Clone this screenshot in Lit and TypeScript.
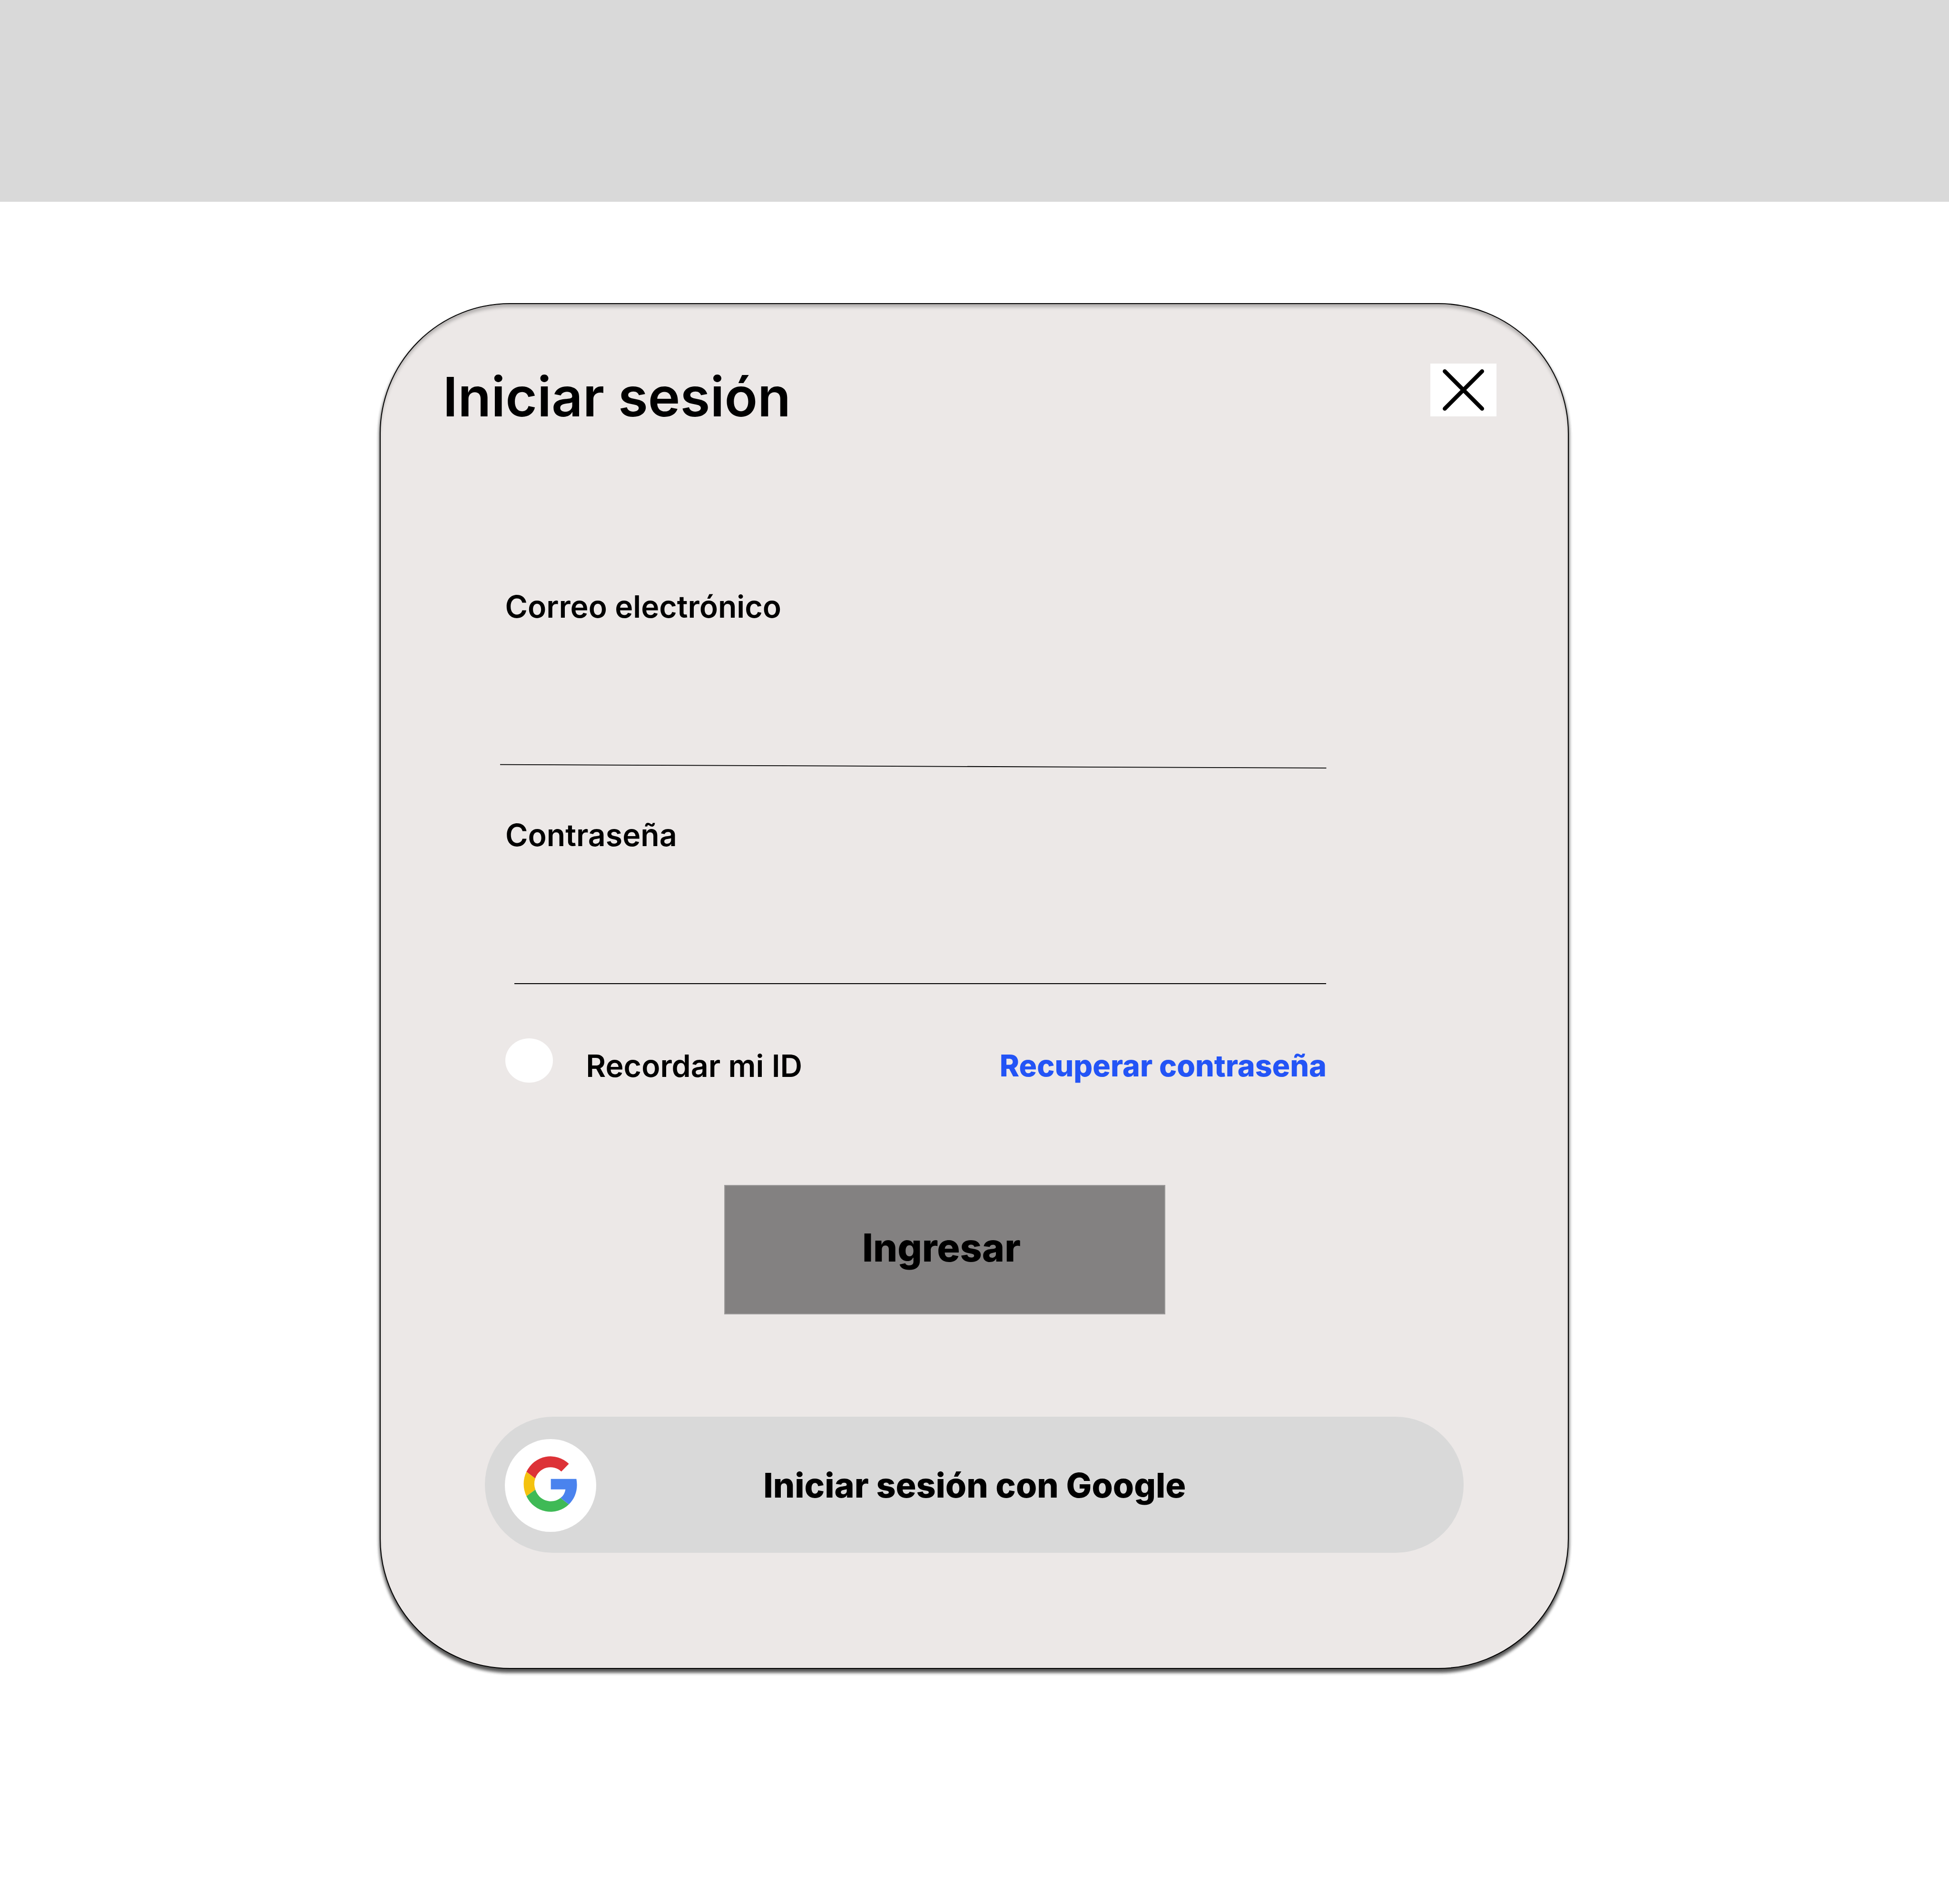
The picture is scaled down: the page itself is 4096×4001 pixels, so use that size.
import { LitElement, html, css, svg } from "lit";
import { customElement } from "lit/decorators.js";

@customElement("close-button")
class CloseButton extends LitElement {
  static styles = css`
    :host {
      display: block;
      width: 139px;
      height: 111px;
      background: #fff;
    }
    svg {
      display: block;
      width: 100%;
      height: 100%;
    }
  `;

  render() {
    return html`
      <svg viewBox="0 0 156 124" role="button" aria-label="Cerrar">
        <path d="M34 18L122 106M122 18L34 106" fill="none" stroke="#000" stroke-width="9.6" stroke-linecap="round" />
      </svg>
    `;
  }
}

@customElement("google-mark")
class GoogleMark extends LitElement {
  static styles = css`
    :host {
      display: block;
      width: 191.5px;
      height: 195px;
      border-radius: 50%;
      background: #fff;
    }
    svg {
      display: block;
      width: 100%;
      height: 100%;
    }
  `;

  private segments = [
    { fill: "#dd3237", d: "M350 464A188.5 194 0 0 1 649 408L596 462A114 117 0 0 0 412 511Z" },
    { fill: "#f4c20f", d: "M350 464A188.5 194 0 0 0 350 636L413 590A114 117 0 0 1 412 511Z" },
    { fill: "#3fba56", d: "M350 636A188.5 194 0 0 0 649 694L590 649A114 117 0 0 1 413 590Z" },
    { fill: "#4a83ee", d: "M522 514H702Q706 538 706 556A188.5 194 0 0 1 649 694L590 649Q619 628 625 588H522Z" },
  ];

  render() {
    return html`
      <svg viewBox="198 233 642 655" preserveAspectRatio="none" aria-hidden="true">
        ${this.segments.map((s) => svg`<path d=${s.d} fill=${s.fill} />`)}
      </svg>
    `;
  }
}

@customElement("app-root")
class AppRoot extends LitElement {
  static styles = css`
    :host {
      display: block;
      width: 4096px;
      height: 4001px;
      background: #fff;
      color: #000;
      font-family: Inter, "Liberation Sans", sans-serif;
      overflow: hidden;
    }
    * {
      box-sizing: border-box;
    }
    .topbar {
      height: 424px;
      background: #d9d9d9;
    }
    .card {
      display: flex;
      flex-direction: column;
      align-items: flex-start;
      width: 2499px;
      height: 2870px;
      margin: 213px 0 0 798px;
      padding-top: 125px;
      border: 2px solid #000;
      border-radius: 274px;
      background: #ece8e7;
      box-shadow:
        inset 0 8.3px 7px -2px rgba(0, 0, 0, 0.25),
        0 6.3px 7px rgba(0, 0, 0, 0.25),
        0 6.3px 7px rgba(0, 0, 0, 0.25),
        0 6.3px 7px rgba(0, 0, 0, 0.25),
        0 6.3px 7px rgba(0, 0, 0, 0.25);
    }
    .head {
      display: flex;
      justify-content: space-between;
      width: 100%;
      height: 111px;
      padding: 0 150px 0 130.5px;
    }
    .title {
      margin: 12px 0 0;
      font-size: 114.5px;
      line-height: 115px;
      font-weight: 600;
      white-space: nowrap;
    }
    .label {
      font-size: 64.45px;
      line-height: 64px;
      font-weight: 600;
      white-space: nowrap;
      margin-left: 261.5px;
    }
    .email {
      margin-top: 368px;
    }
    .slope {
      display: block;
      width: 1737px;
      height: 20px;
      margin: 293px 0 0 250.8px;
    }
    .password {
      margin: 103px 0 0 262px;
    }
    .rule {
      width: 1706px;
      height: 2px;
      margin: 279px 0 0 281px;
      background: #000;
    }
    .options {
      display: flex;
      height: 93px;
      margin: 114px 0 0 261.5px;
      width: 1726.4px;
    }
    .radio {
      width: 100.3px;
      height: 93px;
      border-radius: 50%;
      background: #fff;
    }
    .remember {
      margin: 26px 0 0 69.5px;
    }
    .recover {
      margin: 26px 0 0 auto;
      font-size: 62.66px;
      line-height: 63px;
      font-weight: 800;
      white-space: nowrap;
      color: #2354f6;
    }
    .submit {
      display: flex;
      justify-content: flex-start;
      width: 927px;
      height: 272px;
      margin: 215px 0 0 722px;
      padding: 89px 0 0 288px;
      border: 2px solid #9b9999;
      background: #838181;
      font-size: 80.56px;
      line-height: 81px;
      font-weight: 800;
    }
    .google {
      display: flex;
      width: 2056.5px;
      height: 286px;
      margin: 215px 0 0 219px;
      padding: 46.6px 0 0 42.2px;
      border-radius: 143px;
      background: #d9d9d9;
    }
    .google-text {
      margin: 61.4px 0 0 351.6px;
      font-size: 71.65px;
      line-height: 72px;
      font-weight: 800;
      white-space: nowrap;
    }
  `;

  render() {
    return html`
      <div class="topbar"></div>
      <main class="card">
        <div class="head">
          <h1 class="title">Iniciar sesión</h1>
          <close-button></close-button>
        </div>
        <div class="label email">Correo electrónico</div>
        <svg class="slope" viewBox="0 0 1737 20">
          <line x1="0" y1="6.7" x2="1736.4" y2="13.9" stroke="#000" stroke-width="1.8" />
        </svg>
        <div class="label password">Contraseña</div>
        <div class="rule"></div>
        <div class="options">
          <div class="radio"></div>
          <div class="label remember">Recordar mi ID</div>
          <div class="recover">Recuperar contraseña</div>
        </div>
        <div class="submit">Ingresar</div>
        <div class="google">
          <google-mark></google-mark>
          <div class="google-text">Iniciar sesión con Google</div>
        </div>
      </main>
    `;
  }
}
